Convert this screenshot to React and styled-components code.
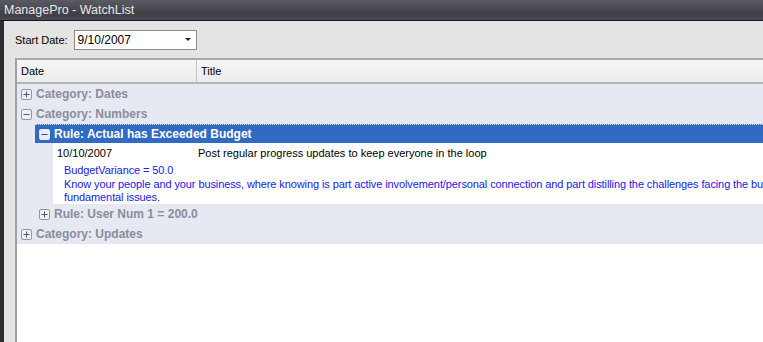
import React from 'react';
import styled, { createGlobalStyle } from 'styled-components';

const GlobalStyle = createGlobalStyle`
  html, body { margin: 0; padding: 0; background: #e4e4e4; }
  body { font-family: Tahoma, "Liberation Sans", Arial, sans-serif; font-size: 11px; }
`;

const Window = styled.div`
  width: 763px;
  height: 342px;
  display: flex;
  flex-direction: column;
  overflow: hidden;
  background: #e4e4e4;
`;

const TitleBar = styled.div`
  height: 20px;
  flex: none;
  display: flex;
  align-items: center;
  padding-left: 4px;
  color: #e8e8ec;
  font-size: 12.5px;
  background: linear-gradient(#5a5b64 0%, #4c4d55 35%, #3e3f45 70%, #4a4b52 100%);
  border-bottom: 1px solid #16161c;
`;

const Body = styled.div`
  flex: 1;
  display: flex;
  flex-direction: column;
  border-left: 4px solid #2e2f35;
  min-height: 0;
`;

const Toolbar = styled.div`
  height: 37px;
  flex: none;
  display: flex;
  align-items: center;
  gap: 6px;
  padding-left: 11px;
  color: #000;
`;

const Combo = styled.div`
  box-sizing: border-box;
  width: 123px;
  height: 20px;
  border: 1px solid #8c8c8c;
  background: #fff;
  display: flex;
  align-items: center;
  justify-content: space-between;
  padding: 0 5px 0 3px;
  font-size: 12px;
`;

const Caret = styled.span`
  width: 0;
  height: 0;
  border-left: 3px solid transparent;
  border-right: 3px solid transparent;
  border-top: 3px solid #222;
`;

const Grid = styled.div`
  flex: 1;
  margin-left: 11px;
  width: 800px;
  border-top: 2px solid #a9a9a9;
  border-left: 2px solid #a0a0a0;
  background: #fff;
  display: flex;
  flex-direction: column;
`;

const Header = styled.div`
  height: 22px;
  display: flex;
  background: linear-gradient(#f6f6f6, #ececec);
  border-bottom: 2px solid #b4b4b4;
`;

const HeaderCell = styled.div`
  width: ${p => p.w || 'auto'};
  flex: ${p => (p.w ? 'none' : 1)};
  display: flex;
  align-items: center;
  padding-left: 4px;
  border-right: ${p => (p.w ? '1px solid #c4c4c4' : 'none')};
  font-size: 11px;
  color: #000;
`;

const Groups = styled.div`
  background: #e6e8f2;
`;

const GroupRow = styled.div`
  height: 20px;
  display: flex;
  align-items: center;
  gap: 4px;
  padding-left: ${p => 4 + p.level * 18}px;
  color: ${p => (p.selected ? '#fff' : '#8b8d9c')};
  font-weight: bold;
  font-size: 12px;
`;

const SelectedRow = styled(GroupRow)`
  margin-left: 18px;
  padding-left: 4px;
  height: 18px;
  background: #316ac5;
  border-top: 1px dotted #c8d8f4;
`;

const Detail = styled.div`
  margin-left: 36px;
  background: #fff;
  padding: 1px 0 0 4px;
  height: 61px;
  box-sizing: border-box;
`;

const DetailLine = styled.div`
  display: flex;
  height: 17px;
  align-items: center;
  color: #000;
  white-space: nowrap;
`;

const DateCell = styled.span`
  width: 141px;
  flex: none;
`;

const Note = styled.div`
  margin-top: 3px;
  padding-left: 7px;
  color: #2020e6;
  line-height: 13.5px;
  letter-spacing: -0.1px;
  white-space: nowrap;
`;

const Empty = styled.div`
  flex: 1;
  background: #fff;
`;

const Toggle = ({ open, light }) => (
  <svg width="11" height="11" viewBox="0 0 11 11">
    <rect x="0.5" y="0.5" width="10" height="10" rx="1.5"
      fill={light ? '#e8ecf6' : '#eef0f6'} stroke={light ? '#dfe6f5' : '#9095ac'} />
    <rect x="2.5" y="5" width="6" height="1" fill={light ? '#3a4a78' : '#505878'} />
    {!open && <rect x="5" y="2.5" width="1" height="6" fill="#505878" />}
  </svg>
);

export default function App() {
  return (
    <Window>
      <GlobalStyle />
      <TitleBar>ManagePro - WatchList</TitleBar>
      <Body>
        <Toolbar>
          <span>Start Date:</span>
          <Combo>
            <span>9/10/2007</span>
            <Caret />
          </Combo>
        </Toolbar>
        <Grid>
          <Header>
            <HeaderCell w="175px">Date</HeaderCell>
            <HeaderCell>Title</HeaderCell>
          </Header>
          <Groups>
            <GroupRow level={0}><Toggle />Category: Dates</GroupRow>
            <GroupRow level={0}><Toggle open />Category: Numbers</GroupRow>
            <SelectedRow level={1} selected><Toggle open light />Rule: Actual has Exceeded Budget</SelectedRow>
            <Detail>
              <DetailLine>
                <DateCell>10/10/2007</DateCell>
                <span>Post regular progress updates to keep everyone in the loop</span>
              </DetailLine>
              <Note>
                BudgetVariance = 50.0<br />
                Know your people and your business, where knowing is part active involvement/personal connection and part distilling the challenges facing the business into<br />
                fundamental issues.
              </Note>
            </Detail>
            <GroupRow level={1}><Toggle />Rule: User Num 1 = 200.0</GroupRow>
            <GroupRow level={0}><Toggle />Category: Updates</GroupRow>
          </Groups>
          <Empty />
        </Grid>
      </Body>
    </Window>
  );
}
